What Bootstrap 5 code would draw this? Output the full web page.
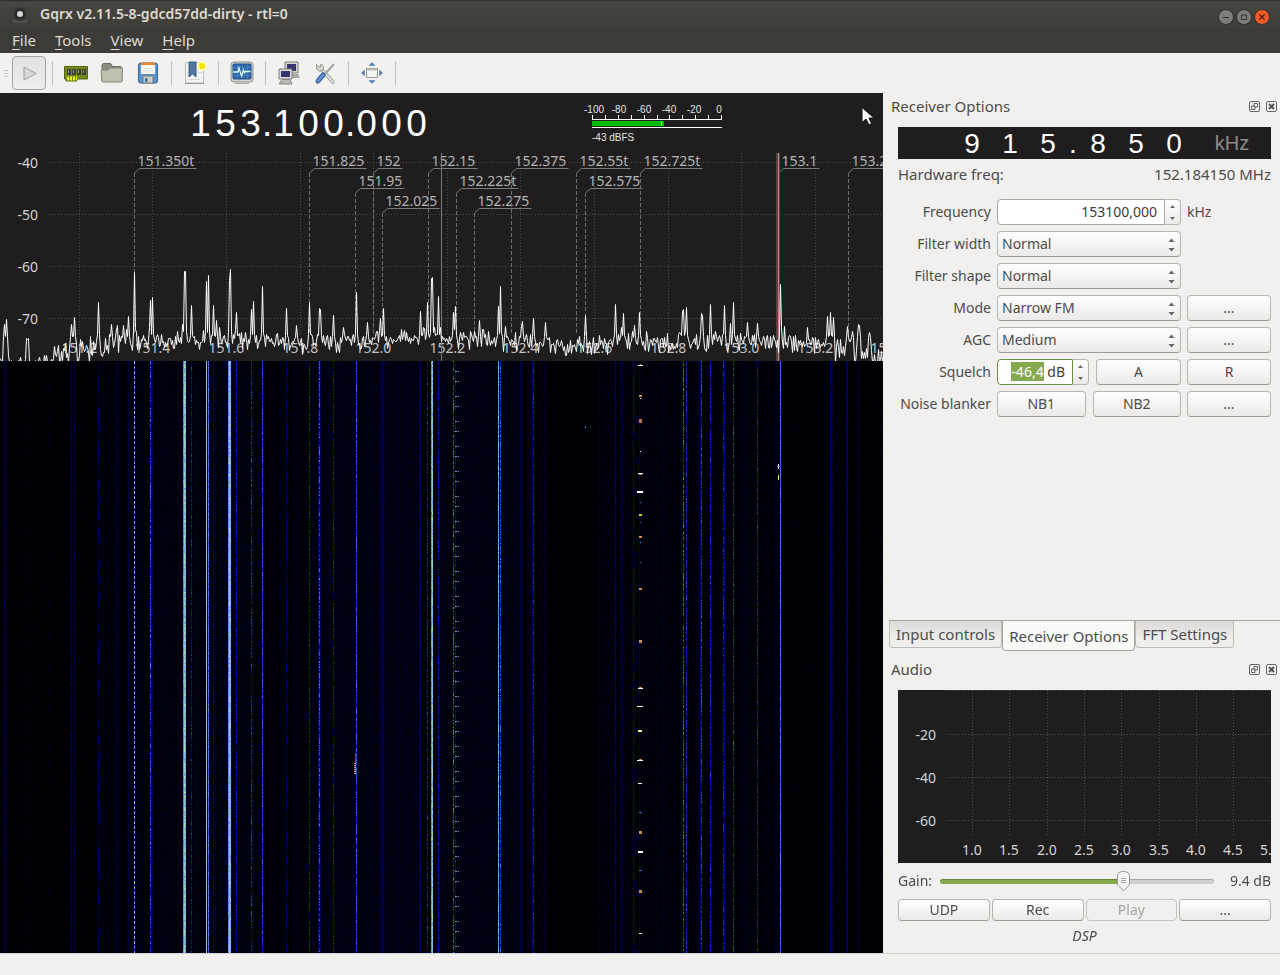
<!DOCTYPE html>
<html lang="en">
<head>
<meta charset="utf-8">
<meta name="viewport" content="width=device-width, initial-scale=1">
<title>Gqrx v2.11.5-8-gdcd57dd-dirty - rtl=0</title>
<link href="https://cdn.jsdelivr.net/npm/bootstrap@5.3.0/dist/css/bootstrap.min.css" rel="stylesheet">
<style>
  :root { --ink: #4c4c4c; --panel: #f1f0ee; --plot: #1f1d1d; --line: #a9a7a4; }
  body { font-family: "Noto Sans", sans-serif; font-size: 14px; line-height: 20px; color: var(--ink); background: var(--panel); }
  button, input, select { font-family: inherit; }
  .title-bar { height: 28px; padding: 0 10px 0 8px; background: linear-gradient(#33322e 1px, #4a4944 2px, #45443f 5px, #3e3d38); color: #dfdbd2; font-weight: 600; }
  .win-keys { gap: 2px; }
  .win-btn { width: 16px; height: 16px; padding: 0; border: 0; background: none; display: block; }
  .menu-row { height: 25px; padding: 0 3px 2px; gap: 1px; background: #3c3b37; }
  .menu-row a { color: #dfdbd2; font-size: 15px; text-decoration: none; padding: 0 9px; }
  .menu-row a::first-letter { text-decoration: underline; text-underline-offset: 3px; }
  .tool-row { height: 40px; background: #f2f1f0; }
  .tool-btn { width: 36px; height: 32px; padding: 0; border: 0; background: none; display: flex; align-items: center; justify-content: center; }
  .tool-btn.play { width: 34px; height: 34px; margin-right: 1px; border: 1px solid #a5a3a1; border-radius: 4px; background: linear-gradient(#e3e2e1, #efeeed); }
  .tool-sep { width: 1px; height: 24px; margin: 0 5px; background: #c4c2c0; }
  .plot-pane { background: var(--plot); overflow: hidden; }
  .plot-head { height: 60px; display: grid; grid-template-columns: 188fr 241px 155fr 140px 159fr; }
  .digits { display: flex; font-family: "Liberation Sans", sans-serif; color: #fff; text-align: center; }
  .digits-main { grid-column: 2; font-size: 37px; line-height: 62px; }
  .digits-main span { width: 25px; } .digits-main .dot { width: 8px; text-indent: -1px; }
  .digits-lnb { background: var(--plot); font-size: 28px; height: 32px; line-height: 33px; justify-content: flex-end; }
  .digits-lnb span { width: 38px; } .digits-lnb .dot { width: 12px; }
  .digits-lnb .unit { width: 78px; color: #8c8c8c; font-size: 20px; }
  .meter { grid-column: 4; }
  .pointer { right: 9px; top: 14px; }
  .spectrum { display: block; width: 100%; height: 208px; font-size: 14px; }
  .waterfall { display: block; width: 100%; flex: 1 1 0; min-height: 0; background: #000; }
  .dock { width: 397px; }
  .dock-title { height: 26px; padding: 0 3px 0 8px; gap: 6px; font-size: 15px; }
  .dock-title button { width: 11px; height: 11px; padding: 0; border: 0; background: none; display: block; }
  .dock-body { padding: 8px 9px 0 15px; }
  .hw-row { padding: 5px 0 15px; font-size: 15px; }
  .form-cells { display: grid; grid-template-columns: 93px minmax(0, 1fr) 84px; column-gap: 6px; row-gap: 6px; align-items: center; }
  .form-cells > label, .form-cells > .lbl { text-align: right; white-space: nowrap; }
  .gk-btn { height: 26px; padding: 0; font-size: 14px; line-height: 22px; color: var(--ink); border: 1px solid #b7b5b2; border-bottom-color: #9c9a97; border-radius: 4px; background: linear-gradient(#fff, #f3f2f1 60%, #ebeae8); }
  .gk-btn:disabled { color: #a5a3a1; border-color: #c5c3c1; background: #f1f0ee; opacity: 1; }
  .gk-select { height: 26px; padding: 0 24px 0 4px; font-size: 14px; line-height: 22px; color: var(--ink); border: 1px solid #b7b5b2; border-bottom-color: #9c9a97; border-radius: 4px; background: url("data:image/svg+xml,%3Csvg xmlns='http://www.w3.org/2000/svg' width='7' height='14'%3E%3Cpath d='M.5 4 3.5.5l3 3.500zM.5 10l3 3.500 3-3.500z' fill='%23666'/%3E%3C/svg%3E") no-repeat right 5px bottom 4px / 7px 14px, linear-gradient(#fff, #f3f2f1 60%, #ebeae8); }
  .spin { height: 26px; display: flex; }
  .spin input { min-width: 0; height: 26px; flex: 1; padding: 0 7px 1px; text-align: right; font-size: 14px; color: #3c3c3c; background: #fff; border: 1px solid var(--line); border-radius: 4px 0 0 4px; outline: 0; }
  .spin .on { border-color: #6b8e3d; }
  .spin input::selection { background: #86a84f; color: #fff; }
  .spin-keys { width: 16px; border: 1px solid #b7b5b2; border-left: 0; border-radius: 0 4px 4px 0; background: linear-gradient(#fff, #ebeae8); display: flex; flex-direction: column; }
  .spin-keys button { flex: 1; padding: 0; border: 0; background: none; display: flex; align-items: center; justify-content: center; }
  .btn-pair { gap: 7px; }
  .tab-row { margin-left: 6px; border-top: 1px solid var(--line); height: 32px; font-size: 15px; }
  .tab-row .nav-link { height: 27px; padding: 3px 6px; color: var(--ink); border: 1px solid #bdbbb8; border-top: 0; border-radius: 0 0 4px 4px; background: linear-gradient(#dbdad8, #efeeec 70%); line-height: 20px; }
  .tab-row .nav-link.active { height: 30px; padding-top: 5px; background: #f9f9f8; color: var(--ink); border-color: var(--line); }
  .audio-plot { display: block; width: 100%; height: 173px; background: var(--plot); font-size: 14px; }
  .gain-row { height: 36px; }
  .gain { height: 22px; background: none; appearance: none; }
  .gain::-webkit-slider-runnable-track { height: 5px; border-radius: 3px; border: 0; background: linear-gradient(90deg, #86a84f 68%, #d2d0ce 68%); box-shadow: inset 0 1px 0 #0003; }
  .gain::-webkit-slider-thumb { width: 13px; height: 20px; margin-top: -8px; border: 0; border-radius: 0; box-shadow: none; background: url("data:image/svg+xml,%3Csvg xmlns='http://www.w3.org/2000/svg' width='13' height='20'%3E%3Cpath d='M.5 5Q.5.500 6.500.500t6 4.500v9l-6 5.500-6-5.500z' fill='%23f4f3f2' stroke='%23999'/%3E%3Cpath d='M4 7.500h5M4 9.500h5M4 11.500h5' stroke='%23aaa'/%3E%3C/svg%3E") no-repeat; }
  .gain::-webkit-slider-thumb:active { background-color: transparent; }
  .deck { gap: 2px; }
  .deck .gk-btn { flex: 1 1 0; height: 22px; line-height: 18px; }
  .dsp { padding: 5px 0 7px; }
  .status { height: 22px; border-top: 1px solid #d6d4d1; }
</style>
</head>
<body>
<div class="d-flex flex-column min-vh-100">
  <header>
    <div class="title-bar d-flex align-items-center">
      <svg width="24" height="20" viewBox="0 0 24 20" aria-hidden="true"><rect x="4" y="3" width="16" height="16" rx="2" fill="#403f3c"/><circle cx="12" cy="10" r="6" fill="#2e2d2b"/><circle cx="12" cy="10" r="3" fill="#d6d6d6"/><path d="M5 15q7 5 14 0v3q-7 2-14 0z" fill="#55544f"/></svg>
      <span class="ms-2">Gqrx v2.11.5-8-gdcd57dd-dirty - rtl=0</span>
      <div class="win-keys ms-auto d-flex align-items-center">
        <button class="win-btn" aria-label="Minimize"><svg width="16" height="16"><circle cx="8" cy="8" r="7.500" fill="#7e7d78" stroke="#2f2e2b"/><path d="M5 8.500h6" stroke="#33322e"/></svg></button>
        <button class="win-btn" aria-label="Maximize"><svg width="16" height="16"><circle cx="8" cy="8" r="7.500" fill="#7e7d78" stroke="#2f2e2b"/><path d="M5.500 6h5v4.500h-5z" fill="none" stroke="#33322e"/></svg></button>
        <button class="win-btn" aria-label="Close"><svg width="16" height="16"><circle cx="8" cy="8" r="7.500" fill="#ee5a2a" stroke="#2f2e2b"/><path d="m5.500 5.500 5 5m0-5-5 5" stroke="#4a1c0c" stroke-width="1.200"/></svg></button>
      </div>
    </div>
    <nav class="menu-row d-flex align-items-center" aria-label="Menu">
      <a class="d-block" href="#">File</a><a class="d-block" href="#">Tools</a><a class="d-block" href="#">View</a><a class="d-block" href="#">Help</a>
    </nav>
    <div class="tool-row d-flex align-items-center">
      <svg width="12" height="24" aria-hidden="true"><path d="M4 9.500h4M4 12.500h4M4 15.500h4" stroke="#c9c7c5"/></svg>
      <button class="tool-btn play" aria-label="Start DSP"><svg width="20" height="20"><path d="m5 4 12 6.500L5 17z" fill="#d9d8d7" stroke="#a09e9c" stroke-linejoin="round"/></svg></button>
      <span class="tool-sep"></span>
      <button class="tool-btn" aria-label="I/O devices"><svg width="24" height="24"><path d="M.5 5.500h23v12.500H13v2H2v-2H.5z" fill="#738a1b" stroke="#55660f"/><path d="M3 8h4v6H3zM8 8h4v6H8zM13 8h4v6h-4zM18 8h4v6h-4z" fill="#3b4037"/><path d="M4.500 9v3M9.500 9v3M14.500 9v3M19.500 9v3" stroke="#8f9488"/><path d="M3 16.500h10M3 18.500h10" stroke="#e9ef22" stroke-width="2" stroke-dasharray="2 1"/></svg></button>
      <button class="tool-btn" aria-label="Open settings"><svg width="24" height="24"><path d="M2 4.500q0-2 2-2h6q2 0 2 3h8q2 0 2 2V20H2z" fill="#8c8f7d" stroke="#6e715f"/><path d="M1 10q0-1 1-1h6l2-2h11q1.500 0 1.500 1.500L22 20q0 1-1 1H3q-1 0-1-1z" fill="#bfc1b0" stroke="#84877a"/></svg></button>
      <button class="tool-btn" aria-label="Save settings"><svg width="24" height="24"><rect x="2.500" y="2" width="19" height="20" rx="2" fill="#5d92ce" stroke="#3567a3"/><path d="M5 2h14v11H5z" fill="#f5f5f5"/><path d="M5 1.500h14v2.500H5z" fill="#e8892b"/><path d="M7 7.500h10M7 10h10" stroke="#ddd"/><path d="M7 15h10v7H7z" fill="#cfd0cc" stroke="#777"/><path d="M9 17h2.500v4H9z" fill="#3d6ea8"/></svg></button>
      <span class="tool-sep"></span>
      <button class="tool-btn" aria-label="Bookmarks"><svg width="24" height="24"><path d="M2.500 1.500h18V22h-18z" fill="#f3f3f2" stroke="#bbb"/><path d="M2 22.500h19" stroke="#999"/><path d="M14 8.500h5M14 11.500h5M6 18.500h11" stroke="#d9d9d9"/><path d="M6 1h7v15l-3.500-3L6 16z" fill="#52769f" stroke="#3c5f89"/><circle cx="19" cy="5" r="5" fill="#fff9ae"/><circle cx="19" cy="5" r="3" fill="#f4e300"/></svg></button>
      <span class="tool-sep"></span>
      <button class="tool-btn" aria-label="DX cluster"><svg width="24" height="24"><rect x="1" y="1" width="22" height="20" rx="3" fill="#d2d4d0" stroke="#8e908b"/><rect x="3" y="3" width="18" height="15" rx="1" fill="#2e67ae" stroke="#1f4a84"/><path d="M3 6.500h18M3 10.500h18M3 14.500h18M7.500 3v15M12.500 3v15M17.500 3v15" stroke="#5f91cc" stroke-width=".5"/><path d="M3 11h5l1-4 2.500 8 2-6 1 3 1-1.500h5" fill="none" stroke="#d8ffe0" stroke-width="1.300"/><path d="M5 22.500h14" stroke="#aaa"/></svg></button>
      <span class="tool-sep"></span>
      <button class="tool-btn" aria-label="Remote control"><svg width="24" height="24"><path d="M8 1h13v11H8z" fill="#d4d4d0" stroke="#7d7d79"/><path d="M10 3h9v7h-9z" fill="#36356f"/><path d="M12 13h9l2 4H13z" fill="#aaa9a5"/><path d="M2 8h13v10H2z" fill="#dededb" stroke="#7d7d79"/><path d="M4 10h9v6H4z" fill="#36356f"/><path d="M5 18.500h8l2 4.500H2z" fill="#b9b9b5" stroke="#888"/></svg></button>
      <button class="tool-btn" aria-label="Tools"><svg width="24" height="24"><path d="m8 8 12 13" stroke="#9a9a97" stroke-width="3.500" stroke-linecap="round"/><path d="m8 8 12 13" stroke="#dedfdc" stroke-width="2" stroke-linecap="round"/><path d="M3.500 3.500 7 6.500l1-3.500q4 2 2 6.500-4 2-6.500-1.500z" fill="#d4d5d2" stroke="#9a9a97"/><path d="m21 3-9 10" stroke="#a5a6a3" stroke-width="2"/><path d="m10 14-5 6" stroke="#2a579a" stroke-width="5" stroke-linecap="round"/><path d="m10 14-5 6" stroke="#5f8fcd" stroke-width="3" stroke-linecap="round"/></svg></button>
      <span class="tool-sep"></span>
      <button class="tool-btn" aria-label="Full screen"><svg width="24" height="24"><rect x="6.500" y="7.500" width="11" height="9" fill="#f3f3f3" stroke="#999"/><path d="M7 8.500h10" stroke="#bbb" stroke-width="2"/><path d="m12 1.500 3 3H9zM12 22.500l3-3H9zM1.500 12l3-3v6zM22.500 12l-3-3v6z" fill="#4e7bb5" stroke="#4e7bb5" stroke-width=".5"/></svg></button>
      <span class="tool-sep"></span>
    </div>
  </header>

  <main class="d-flex flex-fill">
    <section class="plot-pane d-flex flex-column flex-fill" aria-label="Spectrum">
      <div class="plot-head position-relative">
        <div class="digits digits-main"><span>1</span><span>5</span><span>3</span><span class="dot">.</span><span>1</span><span>0</span><span>0</span><span class="dot">.</span><span>0</span><span>0</span><span>0</span></div>
        <svg class="meter" width="140" height="60" font-family="Liberation Sans, sans-serif" font-size="10" fill="#e4e4e4">
          <g text-anchor="middle"><text x="10" y="20">-100</text><text x="35" y="20">-80</text><text x="60" y="20">-60</text><text x="85" y="20">-40</text><text x="110" y="20">-20</text><text x="135" y="20">0</text></g>
          <path d="M8.500 22v4M21.500 22v4M34.500 22v4M47.500 22v4M60.500 22v4M73.500 22v4M85.500 22v4M98.500 22v4M111.500 22v4M124.500 22v4M137.500 22v4M8 26.500h130M8 34.500h130" stroke="#fff"/>
          <path d="M8 28h72v5H8z" fill="#00bd00"/><path d="M77.500 28v5" stroke="#e8f000"/>
          <text x="8" y="48">-43 dBFS</text>
        </svg>
        <svg class="pointer position-absolute" width="13" height="20"><path d="M1 .500v15l4-3.500 3 6 2.500-1.500L8 11h5z" fill="#fff" stroke="#111"/></svg>
      </div>
      <svg class="spectrum" id="spectrum"></svg>
      <canvas class="waterfall" id="waterfall"></canvas>
    </section>

    <aside class="dock d-flex flex-column flex-shrink-0">
      <div class="dock-title d-flex align-items-center"><span class="me-auto">Receiver Options</span>
        <button aria-label="Float receiver options"><svg class="d-block" width="11" height="11"><rect x=".5" y=".5" width="10" height="10" rx="1.500" fill="none" stroke="#666"/><path d="M5 2.500h3.500v3.500H5zM2.500 5h3.500v3.500H2.500z" fill="#f1f0ee" stroke="#666"/></svg></button>
        <button aria-label="Close receiver options"><svg class="d-block" width="11" height="11"><rect x=".5" y=".5" width="10" height="10" rx="1.500" fill="none" stroke="#666"/><path d="m3 3 5 5m0-5-5 5" stroke="#555" stroke-width="2"/></svg></button>
      </div>
      <div class="dock-body flex-fill">
        <div class="digits digits-lnb"><span>9</span><span>1</span><span>5</span><span class="dot">.</span><span>8</span><span>5</span><span>0</span><span class="unit">kHz</span></div>
        <div class="hw-row d-flex justify-content-between"><span>Hardware freq:</span><span>152.184150 MHz</span></div>
        <div class="form-cells">
          <label for="freq">Frequency</label>
          <div class="spin"><input id="freq" value="153100,000"><div class="spin-keys"><button aria-label="Increase frequency"><svg width="5" height="3"><path d="m0 3 2.500-3L5 3z" fill="#666"/></svg></button><button aria-label="Decrease frequency"><svg width="5" height="3"><path d="m0 0 2.500 3L5 0z" fill="#666"/></svg></button></div></div>
          <span>kHz</span>
          <label for="fw">Filter width</label><select id="fw" class="form-select gk-select"><option>Normal</option></select><span></span>
          <label for="fs">Filter shape</label><select id="fs" class="form-select gk-select"><option>Normal</option></select><span></span>
          <label for="mode">Mode</label><select id="mode" class="form-select gk-select"><option>Narrow FM</option></select><button class="btn gk-btn">...</button>
          <label for="agc">AGC</label><select id="agc" class="form-select gk-select"><option>Medium</option></select><button class="btn gk-btn">...</button>
          <label for="sql">Squelch</label>
          <div class="btn-pair d-flex"><div class="spin w-50"><input id="sql" class="on" value="-46,4 dB"><div class="spin-keys"><button aria-label="Increase squelch"><svg width="5" height="3"><path d="m0 3 2.500-3L5 3z" fill="#666"/></svg></button><button aria-label="Decrease squelch"><svg width="5" height="3"><path d="m0 0 2.500 3L5 0z" fill="#666"/></svg></button></div></div><button class="btn gk-btn flex-fill">A</button></div>
          <button class="btn gk-btn">R</button>
          <span class="lbl">Noise blanker</span>
          <div class="btn-pair d-flex"><button class="btn gk-btn flex-fill">NB1</button><button class="btn gk-btn flex-fill">NB2</button></div>
          <button class="btn gk-btn">...</button>
        </div>
      </div>
      <nav class="nav tab-row flex-nowrap align-items-start">
        <a class="nav-link" href="#">Input controls</a><a class="nav-link active" href="#">Receiver Options</a><a class="nav-link" href="#">FFT Settings</a>
      </nav>
      <div class="dock-title d-flex align-items-center mt-1"><span class="me-auto">Audio</span>
        <button aria-label="Float audio"><svg class="d-block" width="11" height="11"><rect x=".5" y=".5" width="10" height="10" rx="1.500" fill="none" stroke="#666"/><path d="M5 2.500h3.500v3.500H5zM2.500 5h3.500v3.500H2.500z" fill="#f1f0ee" stroke="#666"/></svg></button>
        <button aria-label="Close audio"><svg class="d-block" width="11" height="11"><rect x=".5" y=".5" width="10" height="10" rx="1.500" fill="none" stroke="#666"/><path d="m3 3 5 5m0-5-5 5" stroke="#555" stroke-width="2"/></svg></button>
      </div>
      <div class="dock-body">
        <svg class="audio-plot" id="audio"></svg>
        <div class="gain-row d-flex align-items-center"><label for="gain">Gain:</label><input type="range" class="form-range gain flex-fill mx-2" id="gain" min="0" max="100" value="68"><span class="text-nowrap ms-2">9.4 dB</span></div>
        <div class="deck d-flex"><button class="btn gk-btn">UDP</button><button class="btn gk-btn">Rec</button><button class="btn gk-btn" disabled>Play</button><button class="btn gk-btn">...</button></div>
        <div class="dsp text-center fst-italic">DSP</div>
      </div>
    </aside>
  </main>
  <footer class="status"></footer>
</div>
<script src="https://cdn.jsdelivr.net/npm/bootstrap@5.3.0/dist/js/bootstrap.bundle.min.js"></script>
<script>
const SPAN = 883, CENTER = 152.18415, PER_MHZ = 368;
const NS = 'http://www.w3.org/2000/svg';
function add(parent, tag, attrs, text) {
  const e = document.createElementNS(NS, tag);
  for (const k in attrs) e.setAttribute(k, attrs[k]);
  if (text) e.textContent = text;
  parent.appendChild(e);
  return e;
}
function rng(seed) { return () => { seed = (seed * 1664525 + 1013904223) >>> 0; return seed / 4294967296; }; }

// [bin, level row] pairs of the carriers above the noise floor
const peaks = [[4,324],[6,319],[27,339],[71,324],[74,317],[98,302],[111,324],[116,329],[123,325],[128,316],[134,272],[150,300],[152,297],[184,271],[185,271],[191,305],[206,281],[208,275],[213,305],[216,320],[229,280],[230,269],[236,312],[251,309],[253,301],[262,286],[286,308],[296,325],[309,302],[319,308],[320,309],[333,315],[343,327],[356,292],[367,322],[380,318],[383,308],[420,311],[427,302],[431,278],[432,277],[438,296],[453,312],[455,306],[479,320],[483,329],[498,306],[500,286],[505,326],[521,326],[522,321],[533,318],[545,322],[585,315],[615,304],[621,327],[623,313],[634,325],[639,312],[682,311],[683,309],[686,307],[701,313],[702,315],[710,304],[724,305],[733,302],[747,322],[757,323],[780,284],[827,316],[830,312],[833,317],[847,326],[852,331],[858,324],[859,325],[869,332]];
const floorPts = [[0,366],[40,364],[55,357],[75,350],[100,346],[130,339],[200,341],[260,339],[300,344],[400,339],[440,337],[520,342],[580,347],[620,341],[760,341],[800,341],[830,347],[845,353],[860,358],[883,361]];
const marks = [['151.350t',151.35,0],['151.825',151.825,0],['151.95',151.95,1],['152',152,0],['152.025',152.025,2],['152.15',152.15,0],['152.225t',152.225,1],['152.275',152.275,2],['152.375',152.375,0],['152.55t',152.55,0],['152.575',152.575,1],['152.725t',152.725,0],['153.1',153.1,0],['153.29',153.29,0]];

function floorAt(b) {
  for (let i = 1; i < floorPts.length; i++) if (b <= floorPts[i][0]) {
    const [a, ya] = floorPts[i-1], [c, yc] = floorPts[i];
    return ya + (yc - ya) * (b - a) / (c - a);
  }
  return 361;
}
function drawSpectrum() {
  const svg = document.getElementById('spectrum'), w = svg.clientWidth, k = w / SPAN;
  svg.replaceChildren();
  const fx = f => Math.floor(w / 2 + (f - CENTER) * PER_MHZ * k) + .5;
  let grid = '';
  for (let y = 9.5; y < 170; y += 52) grid += `M49 ${y}H${w}`;
  for (let i = 0; i < 11; i++) grid += `M${fx(151.2 + i * .2)} 0V182`;
  add(svg, 'path', {d: grid, stroke: '#504f4f', 'stroke-dasharray': '1 2', fill: 'none'});
  ['-40','-50','-60','-70'].forEach((t, i) => add(svg, 'text', {x: 38, y: 15 + 52 * i, 'text-anchor': 'end', fill: '#d4d4d4'}, t));
  for (let i = 0; i < 12; i++) { const f = 151.2 + i * .2; add(svg, 'text', {x: fx(f), y: 200, 'text-anchor': 'middle', fill: '#c4c4c4'}, f.toFixed(1)); }
  for (const [t, f, r] of marks) {
    const x = fx(f), y = r * 20;
    const el = add(svg, 'text', {x: x + 3, y: y + 13, fill: '#b4b4b4'}, t);
    add(svg, 'path', {d: `M${x} ${y+20}l5-4.500h${Math.round(el.getComputedTextLength())}`, stroke: '#7a7a7a', fill: 'none'});
    add(svg, 'path', {d: `M${x} ${y+20}V182`, stroke: '#6e6e6e', 'stroke-dasharray': '4 2'});
  }
  add(svg, 'path', {d: `M${Math.floor(w/2)+.5} 0V208`, stroke: '#78797c'});
  const rnd = rng(77), row = [];
  for (let b = 0; b <= SPAN; b++) {
    const edge = b < 110 || b > 825;
    row[b] = floorAt(b) + (rnd() + rnd() - 1) * (edge ? 16 : 12) - (rnd() > .92 ? 10 * rnd() : 0);
  }
  for (const [b, y] of peaks) {
    row[b] = y;
    for (const s of [b - 1, b + 1]) if (row[s] > y + 12) row[s] = Math.min(row[s], 338 - (340 - y) * .1);
  }
  const fxr = fx(153.1);
  add(svg, 'rect', {x: fxr - 2.5, y: 0, width: 4, height: 208, fill: '#4b4848'});
  add(svg, 'path', {d: `M${fxr} 0V208`, stroke: '#d87c7c', 'stroke-width': 1});
  add(svg, 'polyline', {points: row.map((y, b) => `${Math.round(b * k) + .5},${Math.round(Math.min(y, 362) - 153) + .5}`).join(' '), fill: 'none', stroke: '#fff'});
}

// carrier lines of the waterfall: [bin, strength, flicker, keyed]
const lines = [[4,.2,.05],[5,.15,.05],[27,.07,.03],[50,.07,.03],[71,.22,.2],[73,.16,.05],[74,.14,.05],[98,.22,.06],[106,.08,.03],[116,.14,.05],[117,.11,.05],[128,.13,.1],[134,.8,.3,1],[150,.5,.5],[152,.22,.3],[183,.7,.15],[184,.85,.25],[185,.8,.2],[191,.36,.4],[206,.86,.15],[208,.64,.2],[213,.28,.3],[215,.15,.1],[228,.7,.15],[229,.85,.25],[230,.8,.2],[236,.36,.4],[239,.13,.05],[251,.4,.5],[253,.18,.15],[262,.52,.3],[286,.24,.2],[297,.1,.05],[309,.36,.4],[318,.25,.1],[319,.5,.45],[320,.25,.1],[333,.36,.4],[341,.11,.05],[356,.54,.3],[380,.14,.05],[381,.16,.08],[382,.19,.08],[383,.18,.05],[386,.11,.05],[398,.1,.04],[405,.11,.04],[419,.16,.06],[420,.26,.12],[427,.38,.4],[431,.72,.2],[432,.84,.25],[438,.36,.45],[453,.5,.5],[455,.32,.4],[498,.76,.3],[500,.52,.4],[505,.13,.1],[520,.16,.05],[521,.2,.1],[532,.22,.05],[533,.4,.35],[545,.15,.06],[599,.1,.05],[615,.28,.2],[621,.14,.05],[622,.18,.1],[633,.26,.25],[635,.11,.05],[639,.15,.1],[663,.1,.05],[681,.2,.1],[683,.5,.4],[686,.42,.4],[700,.24,.08],[701,.45,.4],[710,.4,.4],[723,.38,.45],[724,.28,.1],[733,.42,.4],[745,.1,.04],[757,.38,.35],[780,.62,.2],[827,.11,.05],[830,.23,.1],[833,.2,.04],[846,.23,.08],[847,.25,.1],[858,.18,.12]];
const stops = [[0,0,0,0],[.1,0,0,34],[.22,0,0,88],[.36,0,0,170],[.5,30,55,205],[.65,80,130,225],[.85,145,205,222],[1,215,235,130]];
function tint(v) {
  v = Math.max(0, Math.min(.999, v));
  let i = 1; while (v > stops[i][0]) i++;
  const a = stops[i-1], b = stops[i], t = (v - a[0]) / (b[0] - a[0]);
  return [1,2,3].map(n => a[n] + (b[n] - a[n]) * t);
}
function drawWaterfall() {
  const c = document.getElementById('waterfall'), w = c.width = c.clientWidth, h = c.height = c.clientHeight;
  const g = c.getContext('2d'), img = g.createImageData(w, h), rnd = rng(9), k = w / SPAN;
  const map = new Map(lines.map(l => [Math.round(l[0] * k), l]));
  for (let x = 0; x < w; x++) {
    const b = x / k, l = map.get(x);
    let base = b < 100 ? .002 : b < 130 ? .025 : b < 265 ? .045 : b < 310 ? .025 : b < 520 ? .048 : b < 545 ? .03 : b < 600 ? .014 : b < 780 ? .034 : b < 825 ? .014 : .006;
    base += (rnd() - .5) * .012;
    for (let y = 0; y < h; y++) {
      let v = base + (rnd() - .5) * .06;
      if (l) {
        v = l[1] + (rnd() - .6) * l[2];
        if (l[3] && y % 5 > 2) v = .35;
      }
      const p = (y * w + x) * 4, [r, gg, bb] = tint(v);
      img.data[p] = r; img.data[p+1] = gg; img.data[p+2] = bb; img.data[p+3] = 255;
    }
  }
  g.putImageData(img, 0, 0);
  const dot = (b, y, dw, dh, col) => { g.fillStyle = col; g.fillRect(Math.round(b * k), y - 361, dw, dh); };
  for (let y = 371; y < h + 361; y += 25) { dot(455, y, 2, 1, '#7fa4dc'); dot(458, y, 1, 1, '#5f84dc'); dot(455, y + 10, 2, 1, '#7fa4dc'); dot(458, y + 10, 1, 1, '#5f84dc'); }
  const W = '#fff', O = '#c98d4e', B = '#4a6fd0';
  [[365,5,1,W],[364,1,1,O],[395,3,2,O],[398,1,1,W],[419,3,4,'#c06a5a'],[451,1,1,W],[473,5,1,W],[474,3,1,O],[491,6,2,W],[502,1,1,B],[514,3,2,'#d9c83a'],[522,1,1,B],[536,3,2,O],[542,1,1,B],[562,1,1,B],[588,3,2,O],[640,3,3,O],[687,3,1,O],[688,5,1,W],[706,6,1,W],[730,4,2,'#f5e9b0'],[759,3,1,O],[760,6,1,W],[783,4,1,W],[812,3,1,B],[831,3,3,O],[851,5,2,W],[870,3,1,B],[890,3,3,O],[933,3,1,W]].forEach(([y, dw, dh, col]) => dot(640 - (dw >> 1), y, dw, dh, col));
  dot(778, 464, 1, 5, W); dot(777, 466, 3, 1, '#6c9be0'); dot(778, 475, 1, 5, '#e8e09a');
  dot(355, 753, 1, 21, '#c8281e'); for (let y = 763; y < 774; y += 2) dot(354, y, 2, 1, '#e8a060');
  dot(585, 426, 1, 2, '#4f83c8');
}
function drawAudio() {
  const svg = document.getElementById('audio'), w = svg.clientWidth;
  svg.replaceChildren();
  let d = '';
  for (const y of [.5, 44.5, 87.5, 130.5]) d += `M49 ${y}H${w}`;
  for (let i = 0; i < 8; i++) d += `M${Math.round(74 + i * w / 10)+.5} 0V146`;
  add(svg, 'path', {d, stroke: '#504f4f', 'stroke-dasharray': '1 2', fill: 'none'});
  ['-20','-40','-60'].forEach((t, i) => add(svg, 'text', {x: 38, y: 50 + 43 * i, 'text-anchor': 'end', fill: '#d4d4d4'}, t));
  for (let i = 0; i < 9; i++) add(svg, 'text', {x: Math.round(74 + i * w / 10), y: 165, 'text-anchor': 'middle', fill: '#d4d4d4'}, (1 + i / 2).toFixed(1));
}
function draw() { drawSpectrum(); drawWaterfall(); drawAudio(); }
draw();
addEventListener('resize', draw);
const sql = document.getElementById('sql');
sql.focus({preventScroll: true});
sql.setSelectionRange(0, 5);
</script>
</body>
</html>
